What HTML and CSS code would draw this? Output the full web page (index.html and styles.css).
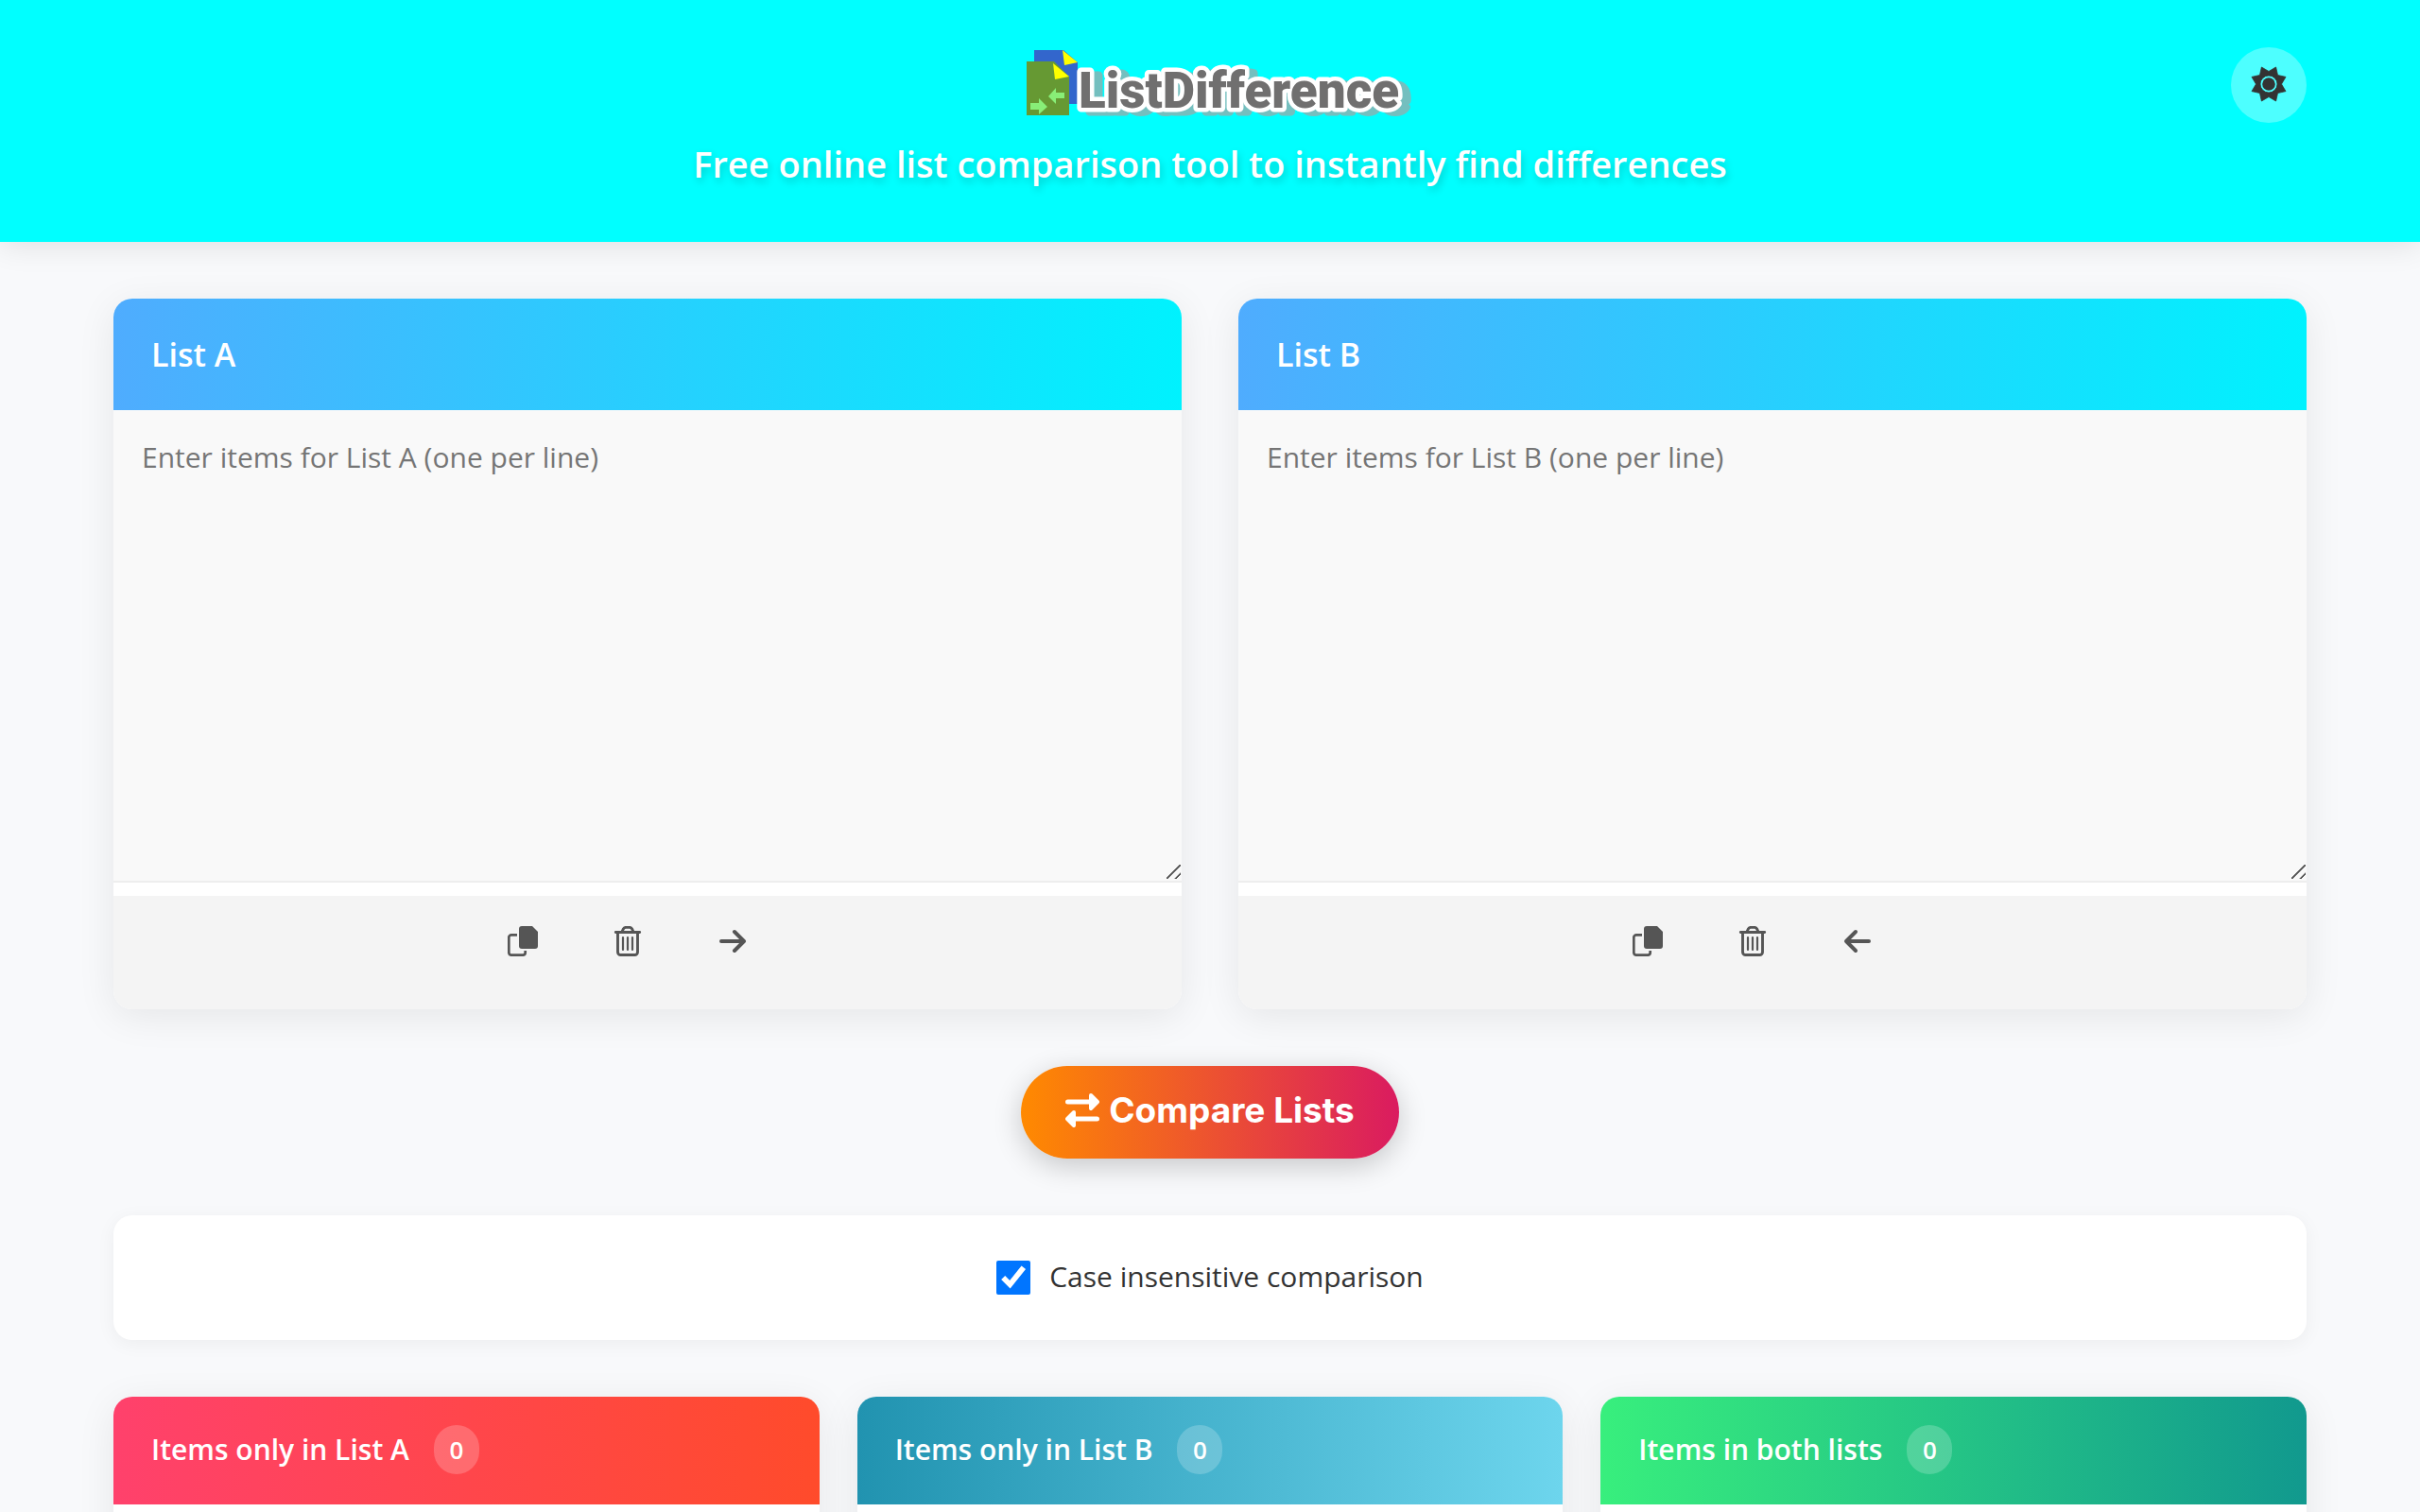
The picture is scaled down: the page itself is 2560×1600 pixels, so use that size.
FILE: index.html
```html
<!DOCTYPE html>
<html lang="en">
<head>
<meta charset="utf-8">
<meta name="viewport" content="width=device-width, initial-scale=1">
<title>ListDifference</title>
<link rel="stylesheet" href="styles.css">
</head>
<body>
<svg class="sprite" aria-hidden="true">
  <symbol id="icon-copy" viewBox="0 0 32 32">
    <path d="M15 0h11l6 6v15a3 3 0 0 1-3 3H15a3 3 0 0 1-3-3V3a3 3 0 0 1 3-3z" fill="currentColor"/>
    <path d="M10 9.300H4A2.700 2.700 0 0 0 1.300 12v16A2.700 2.700 0 0 0 4 30.700h12A2.700 2.700 0 0 0 18.700 28v-2" fill="none" stroke="currentColor" stroke-width="2.700"/>
  </symbol>
  <symbol id="icon-trash" viewBox="0 0 32 32">
    <path d="M3.300 6.500h25.400M5.500 7v20.500a3 3 0 0 0 3 3h15a3 3 0 0 0 3-3V7M10 6l1.400-3a3 3 0 0 1 2.600-1.600h4A3 3 0 0 1 20.600 3L22 6" fill="none" stroke="currentColor" stroke-width="2.900" stroke-linecap="round"/>
    <path d="M11 12v13M16 12v13M21 12v13" fill="none" stroke="currentColor" stroke-width="2.200" stroke-linecap="round"/>
  </symbol>
  <symbol id="icon-right" viewBox="0 0 32 32">
    <path d="M4 16h23M18 6l10 10-10 10" fill="none" stroke="currentColor" stroke-width="4" stroke-linecap="round" stroke-linejoin="round"/>
  </symbol>
  <symbol id="icon-left" viewBox="0 0 32 32">
    <path d="M28 16H5M14 6L4 16l10 10" fill="none" stroke="currentColor" stroke-width="4" stroke-linecap="round" stroke-linejoin="round"/>
  </symbol>
</svg>

<header class="site-header">
  <div class="brand">
    <a class="logo" href="#" aria-label="ListDifference">
      <svg width="390" height="76" viewBox="0 0 390 76">
        <path d="M9 3h31l15 13v44H9z" fill="#36c"/>
        <path d="M39 3l16 13-14 3z" fill="#ff0"/>
        <path d="M1 15h29l16 16v41H1z" fill="#693"/>
        <path d="M29 17l17 14-15 3z" fill="#ff0"/>
        <path d="M5 59h9v-5l9 9-9 8v-5H5zM41 48h-9v-5l-8 9 8 8v-6h9z" fill="#8e7"/>
        <text class="logo-text" x="56" y="64">ListDifference</text>
      </svg>
    </a>
    <p class="tagline">Free online list comparison tool to instantly find differences</p>
  </div>
  <button class="theme-toggle" type="button" aria-label="Toggle theme">
    <svg width="40" height="40" viewBox="-20 -20 40 40">
      <path d="M-7.600-18L0-13.500 7.600-18 9.500-9.500 18-7.600 13.500 0 18 7.600 9.500 9.500 7.600 18 0 13.500-7.600 18-9.500 9.500-18 7.600-13.500 0-18-7.600-9.500-9.500zM9 0A9 9 0 1 0-9 0 9 9 0 1 0 9 0z" fill="currentColor" stroke="currentColor" stroke-width="0.800" stroke-linejoin="round" fill-rule="evenodd"/>
      <circle r="6.800" fill="currentColor"/>
    </svg>
  </button>
</header>

<main class="page">
  <section class="lists">
    <div class="card">
      <h2 class="card-title"><label for="list-a">List A</label></h2>
      <div class="card-input"><textarea id="list-a" placeholder="Enter items for List A (one per line)"></textarea></div>
      <div class="card-actions">
        <button type="button" aria-label="Copy List A"><svg><use href="#icon-copy"/></svg></button>
        <button type="button" aria-label="Clear List A"><svg><use href="#icon-trash"/></svg></button>
        <button type="button" aria-label="Move to List B"><svg><use href="#icon-right"/></svg></button>
      </div>
    </div>
    <div class="card">
      <h2 class="card-title"><label for="list-b">List B</label></h2>
      <div class="card-input"><textarea id="list-b" placeholder="Enter items for List B (one per line)"></textarea></div>
      <div class="card-actions">
        <button type="button" aria-label="Copy List B"><svg><use href="#icon-copy"/></svg></button>
        <button type="button" aria-label="Clear List B"><svg><use href="#icon-trash"/></svg></button>
        <button type="button" aria-label="Move to List A"><svg><use href="#icon-left"/></svg></button>
      </div>
    </div>
  </section>

  <button class="compare" type="button">
    <svg width="36" height="36" viewBox="0 0 36 36" aria-hidden="true">
      <path d="M2.500 9H27M33.500 27H9" stroke="#fff" stroke-width="5" stroke-linecap="round"/>
      <path d="M27 2l7 7-7 7zM9 20l-7 7 7 7z" fill="#fff" stroke="#fff" stroke-width="4" stroke-linejoin="round"/>
    </svg>
    Compare Lists
  </button>

  <section class="options">
    <input type="checkbox" id="case" checked>
    <label for="case">Case insensitive comparison</label>
  </section>

  <section class="results">
    <div class="card result-a">
      <h3 class="result-title">Items only in List A <span class="count">0</span></h3>
      <ul class="result-items"></ul>
    </div>
    <div class="card result-b">
      <h3 class="result-title">Items only in List B <span class="count">0</span></h3>
      <ul class="result-items"></ul>
    </div>
    <div class="card result-both">
      <h3 class="result-title">Items in both lists <span class="count">0</span></h3>
      <ul class="result-items"></ul>
    </div>
  </section>
</main>
</body>
</html>
```
FILE: styles.css
```css
* { box-sizing: border-box; }

html { scrollbar-width: none; }

body {
  margin: 0;
  background: #f8f9fb;
  color: #333;
  font-family: "Segoe UI", "Open Sans", "Noto Sans", sans-serif;
  font-size: 30px;
  line-height: 48px;
}

button { border: 0; cursor: pointer; font: inherit; }

.sprite { display: none; }

.site-header {
  display: grid;
  grid-template-columns: 1fr auto 1fr;
  align-items: start;
  padding: 50px 120px 54px;
  background: #0ff;
  box-shadow: 0 4px 30px rgba(0, 0, 0, 0.1);
}

.brand {
  grid-column: 2;
  display: flex;
  flex-direction: column;
  align-items: center;
}

.logo, .logo svg { display: block; }
.logo svg { overflow: visible; }

.logo-text {
  font-family: Roboto, sans-serif;
  font-size: 53px;
  font-weight: 900;
  fill: #706f6f;
  stroke: #fff;
  stroke-width: 9px;
  stroke-linejoin: round;
  paint-order: stroke;
  filter: drop-shadow(9px 4px 0 #74bfbf);
}

.tagline {
  margin: 18px 0 0;
  color: #fff;
  font-size: 38px;
  font-weight: 600;
  line-height: 58px;
  text-shadow: 2px 4px 8px rgba(0, 0, 0, 0.2);
}

.theme-toggle {
  grid-column: 3;
  justify-self: end;
  display: grid;
  place-items: center;
  width: 80px;
  height: 80px;
  padding: 0 0 2px;
  border-radius: 50%;
  background: rgba(255, 255, 255, 0.3);
  color: #333;
}

.page {
  display: flex;
  flex-direction: column;
  gap: 60px;
  padding: 60px 120px 0;
}

.lists {
  display: grid;
  grid-template-columns: 1fr 1fr;
  gap: 60px;
}

.card {
  overflow: hidden;
  border-radius: 20px;
  background: #fff;
  box-shadow: 0 8px 40px rgba(0, 0, 0, 0.08);
}

.card-title {
  margin: 0;
  padding: 30px 40px;
  background: linear-gradient(to right, #4facfe, #00f2fe);
  color: #fff;
  font-size: 34px;
  font-weight: 600;
  line-height: 58px;
}

.card-input {
  position: relative;
  padding-bottom: 14px;
}

/* Large resize grip drawn over the textarea's corner */
.card-input::after {
  content: "";
  position: absolute;
  right: 1px;
  bottom: 18px;
  width: 15px;
  height: 15px;
  background: linear-gradient(135deg, transparent 45%, #555 47% 53%, transparent 55% 76%, #555 78% 84%, transparent 86%);
  pointer-events: none;
}

.card textarea {
  display: block;
  width: 100%;
  height: 500px;
  padding: 30px;
  border: 0;
  border-bottom: 2px solid #eee;
  background: #f9f9f9;
  color: #333;
  font: inherit;
  line-height: 40px;
  resize: vertical;
}
.card textarea::placeholder { color: #757575; }
.card textarea::-webkit-scrollbar { width: 30px; height: 30px; }
.card textarea::-webkit-resizer { background: transparent; }

.card-actions {
  display: flex;
  justify-content: center;
  align-items: flex-start;
  gap: 39px;
  height: 120px;
  padding: 20px 42px 20px 0;
  background: #f4f4f4;
}

.card-actions button {
  display: grid;
  place-items: center;
  width: 72px;
  height: 56px;
  padding: 0;
  background: none;
  color: #555;
}
.card-actions svg { width: 32px; height: 32px; }

.compare {
  align-self: center;
  display: flex;
  align-items: center;
  gap: 10px;
  padding: 23px 47px 27px;
  border-radius: 49px;
  background: linear-gradient(to right, #ff8a00, #da1b60);
  box-shadow: 0 8px 30px rgba(0, 0, 0, 0.2);
  color: #fff;
  font-family: Inter, sans-serif;
  font-size: 37px;
  font-weight: 700;
  line-height: 48px;
}

.options {
  display: flex;
  justify-content: center;
  align-items: center;
  gap: 20px;
  padding: 42px 40px;
  border-radius: 20px;
  background: #fff;
  box-shadow: 0 4px 20px rgba(0, 0, 0, 0.05);
}
.options input { width: 36px; height: 36px; margin: 0; }
.options label { padding-bottom: 2px; line-height: 46px; }

.results {
  display: grid;
  grid-template-columns: repeat(3, 1fr);
  gap: 40px;
}

.result-title {
  display: flex;
  align-items: center;
  gap: 26px;
  margin: 0;
  padding: 30px 40px 32px;
  color: #fff;
  font-size: 30px;
  font-weight: 600;
  line-height: 52px;
}
.result-a .result-title { background: linear-gradient(to right, #ff416c, #ff4b2b); }
.result-b .result-title { background: linear-gradient(to right, #2193b0, #6dd5ed); }
.result-both .result-title { background: linear-gradient(to right, #38ef7d, #11998e); }

.count {
  min-width: 48px;
  border-radius: 26px;
  background: rgba(255, 255, 255, 0.2);
  font-size: 26px;
  text-align: center;
}

.result-items { min-height: 300px; margin: 0; padding: 30px; list-style: none; }
```
